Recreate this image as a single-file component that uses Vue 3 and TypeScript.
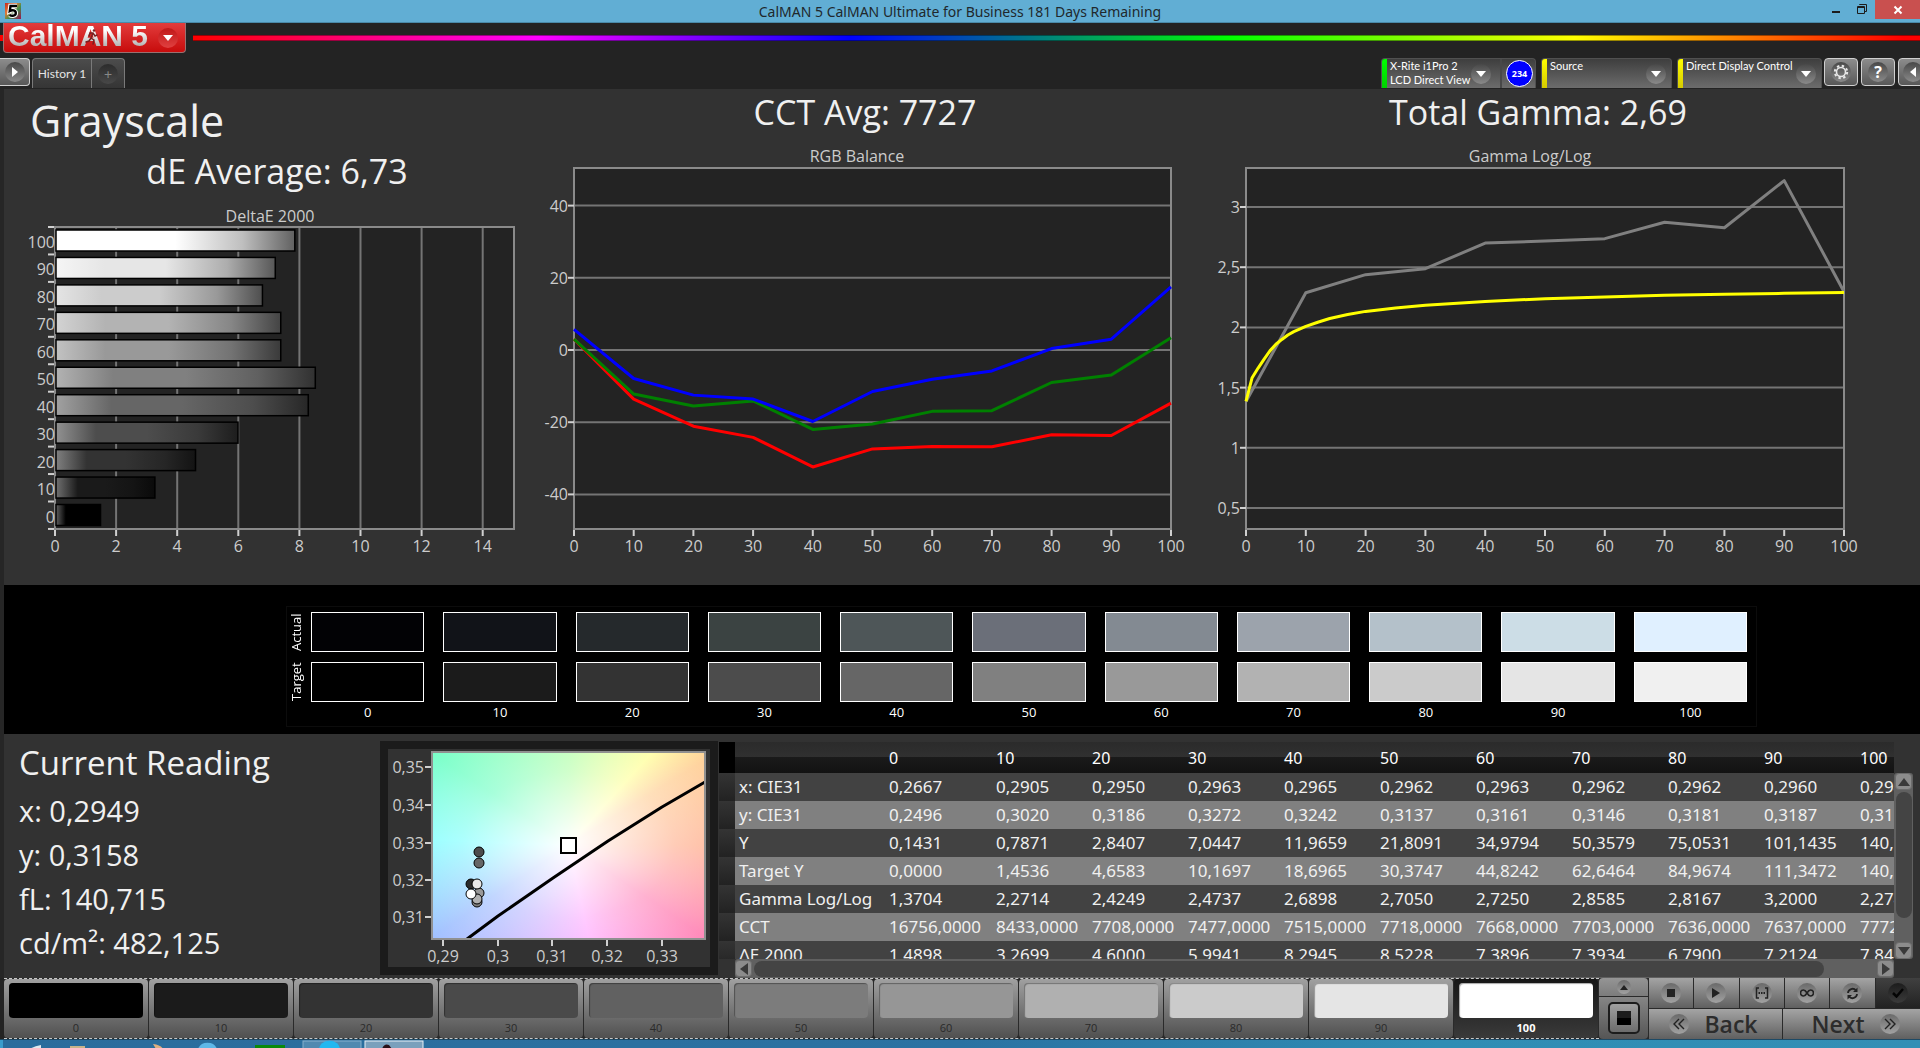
<script setup lang="ts">
interface Series {
  color: string
  values: number[]
}

const levels: number[] = [0, 10, 20, 30, 40, 50, 60, 70, 80, 90, 100]

/* DeltaE bar chart */
const deltaE: number[] = [1.49, 3.27, 4.6, 5.99, 8.29, 8.52, 7.39, 7.39, 6.79, 7.21, 7.85]
const deX = (v: number): number => 51 + v * 30.55
const deRow = (i: number): number => 34 + (10 - i) * 27.45
const deTicks: number[] = [0, 2, 4, 6, 8, 10, 12, 14]

const grey = (v: number): string => `rgb(${v}, ${v}, ${v})`
const barStops = (i: number) => {
  const base = Math.round(i * 25.5)
  return [
    { at: '0%', color: grey(Math.min(255, Math.round(base * 0.65 + 95))) },
    { at: '22%', color: grey(base) },
    { at: '50%', color: grey(base) },
    { at: '78%', color: grey(Math.round(base * 0.75)) },
    { at: '100%', color: grey(Math.round(base * 0.38)) },
  ]
}

/* RGB balance line chart */
const rgbX = (v: number): number => 34 + v * 5.97
const rgbY = (v: number): number => 217 - v * 3.61
const rgbTicks: number[] = [40, 20, 0, -20, -40]
const rgbSeries: Series[] = [
  { color: '#ff0000', values: [3, -13.6, -21.1, -24.2, -32.4, -27.4, -26.7, -26.8, -23.5, -23.7, -14.7] },
  { color: '#008000', values: [3, -12.2, -15.5, -14.1, -22, -20.5, -17, -16.8, -9, -6.9, 3.4] },
  { color: '#0000ff', values: [5.7, -7.9, -12.5, -13.6, -19.8, -11.5, -8.1, -5.8, 0.4, 3, 17.5] },
]
const rgbPoints = (s: Series): string => s.values.map((v, i) => `${rgbX(i * 10)},${rgbY(v)}`).join(' ')

/* Gamma line chart */
const gamX = (v: number): number => 46 + v * 5.98
const gamY = (v: number): number => 74 + (3 - v) * 120.4
const gamTicks: number[] = [3, 2.5, 2, 1.5, 1, 0.5]
const comma = (v: number): string => String(v).replace('.', ',')
const measured: number[] = [1.385, 2.288, 2.438, 2.488, 2.7, 2.717, 2.737, 2.873, 2.828, 3.219, 2.296]
const measuredPoints = measured.map((v, i) => `${gamX(i * 10)},${gamY(v)}`).join(' ')
const targetCurve: [number, number][] = [
  [0, 1.385], [1, 1.579], [2, 1.66], [3, 1.735], [4, 1.805], [5, 1.86], [6, 1.9], [7, 1.937], [8, 1.965],
  [10, 2.008], [12, 2.043], [14, 2.074], [17, 2.107], [20, 2.133], [25, 2.162], [30, 2.184], [40, 2.216],
  [50, 2.238], [60, 2.253], [70, 2.266], [80, 2.275], [90, 2.283], [100, 2.29],
]
const targetPoints = targetCurve.map(([x, y]) => `${gamX(x)},${gamY(y)}`).join(' ')

/* Swatches */
const actual: string[] = ['#020205', '#111318', '#25292c', '#3b4342', '#4e5658', '#6b6f79', '#838a92', '#9ca3ac', '#b4c1ca', '#ccdde6', '#e0f0ff']
const target: string[] = ['#000000', '#1b1b1b', '#333333', '#4c4c4c', '#666666', '#808080', '#999999', '#b2b2b2', '#cbcbcb', '#e5e5e5', '#f0f0f0']
const patches: string[] = ['#000000', '#1b1b1b', '#333333', '#4a4a4a', '#616161', '#7c7c7c', '#969696', '#b0b0b0', '#cbcbcb', '#e5e5e5', '#ffffff']

/* Chromaticity chart */
const cieY = [
  { label: '0,35', y: 18 }, { label: '0,34', y: 56 }, { label: '0,33', y: 94 }, { label: '0,32', y: 131 }, { label: '0,31', y: 168 },
]
const cieX = [
  { label: '0,29', x: 55 }, { label: '0,3', x: 110 }, { label: '0,31', x: 164 }, { label: '0,32', x: 219 }, { label: '0,33', x: 274 },
]
const dots = [
  { x: 91, y: 103, c: '#4c4c4c' }, { x: 91, y: 114, c: '#666666' }, { x: 83, y: 135, c: '#2b2b2b' },
  { x: 91, y: 144, c: '#999999' }, { x: 89, y: 153, c: '#808080' }, { x: 89, y: 150, c: '#b0b0b0' },
  { x: 89, y: 135, c: '#e8e8e8' }, { x: 83, y: 145, c: '#ffffff' },
]

/* Data table */
const rows: { name: string; cells: string[] }[] = [
  { name: 'x: CIE31', cells: ['0,2667', '0,2905', '0,2950', '0,2963', '0,2965', '0,2962', '0,2963', '0,2962', '0,2962', '0,2960', '0,2949'] },
  { name: 'y: CIE31', cells: ['0,2496', '0,3020', '0,3186', '0,3272', '0,3242', '0,3137', '0,3161', '0,3146', '0,3181', '0,3187', '0,3158'] },
  { name: 'Y', cells: ['0,1431', '0,7871', '2,8407', '7,0447', '11,9659', '21,8091', '34,9794', '50,3579', '75,0531', '101,1435', '140,7150'] },
  { name: 'Target Y', cells: ['0,0000', '1,4536', '4,6583', '10,1697', '18,6965', '30,3747', '44,8242', '62,6464', '84,9674', '111,3472', '140,7150'] },
  { name: 'Gamma Log/Log', cells: ['1,3704', '2,2714', '2,4249', '2,4737', '2,6898', '2,7050', '2,7250', '2,8585', '2,8167', '3,2000', '2,2740'] },
  { name: 'CCT', cells: ['16756,0000', '8433,0000', '7708,0000', '7477,0000', '7515,0000', '7718,0000', '7668,0000', '7703,0000', '7636,0000', '7637,0000', '7772,0000'] },
  { name: 'ΔE 2000', cells: ['1,4898', '3,2699', '4,6000', '5,9941', '8,2945', '8,5228', '7,3896', '7,3934', '6,7900', '7,2124', '7,8450'] },
]
</script>

<template>
  <div class="app">
    <div class="titlebar">
      <div class="title-icon">
        <svg width="16" height="16" viewBox="0 0 16 16">
          <defs>
            <linearGradient id="appicon" x1="0" y1="0" x2="1" y2="1">
              <stop offset="0" stop-color="#c22a1e" />
              <stop offset="0.35" stop-color="#e07a3a" />
              <stop offset="0.6" stop-color="#3f8f4a" />
              <stop offset="1" stop-color="#a01050" />
            </linearGradient>
          </defs>
          <rect width="16" height="16" fill="url(#appicon)" />
          <path d="M12 3H5.500L4.800 8C7 6.800 10.800 7 10.800 10C10.800 13 7 13.400 4.500 12" fill="none" stroke="#fff" stroke-width="4.500" />
          <path d="M12 3H5.500L4.800 8C7 6.800 10.800 7 10.800 10C10.800 13 7 13.400 4.500 12" fill="none" stroke="#000" stroke-width="2.400" />
        </svg>
      </div>
      <div class="title-text">CalMAN 5 CalMAN Ultimate for Business 181 Days Remaining</div>
      <div class="win-buttons">
        <button class="win" aria-label="Minimize">
          <svg width="12" height="16" viewBox="0 0 12 16"><rect x="2" y="11" width="8" height="2" fill="#1c1c1c" /></svg>
        </button>
        <button class="win" aria-label="Restore">
          <svg width="12" height="16" viewBox="0 0 12 16" fill="none" stroke="#1c1c1c">
            <path d="M3.500 5V4.500H10.500V11.500H9" />
            <path d="M1.500 6.500H8.500V13.500H1.500ZM1 7.500H9" />
          </svg>
        </button>
        <button class="win close" aria-label="Close">
          <svg width="10" height="10" viewBox="0 0 10 10"><path d="M1.500 1.500L8.500 8.500M8.500 1.500L1.500 8.500" stroke="#fff" stroke-width="2" /></svg>
        </button>
      </div>
    </div>

    <header class="header">
      <div class="brand-row">
        <div class="spectrum-stub"></div>
        <button class="logo" aria-label="CalMAN 5 menu">
          <span class="logo-text">CalMAN 5</span>
          <svg class="runner" width="14" height="18" viewBox="0 0 14 18" fill="none" stroke="#7a2020" stroke-width="1.500" stroke-linecap="round">
            <circle cx="9" cy="2.500" r="1.300" fill="#7a2020" stroke="none" />
            <path d="M8 5L6 10L9 12L8 16M6 10L4 13L1 14M4 8L5 5L8 5L10 8L12 7" />
          </svg>
          <span class="knob red"><svg width="10" height="6" viewBox="0 0 10 6"><path d="M0 0H10L5 6Z" fill="#fff" /></svg></span>
        </button>
        <div class="spectrum"></div>
      </div>

      <div class="tab-row">
        <button class="tool expand" aria-label="Expand">
          <span class="knob"><svg width="6" height="10" viewBox="0 0 6 10"><path d="M0 0L6 5L0 10Z" fill="#fff" /></svg></span>
        </button>
        <div class="tabs">
          <button class="tab">History 1</button>
          <button class="tab add" aria-label="Add tab"><span class="knob dark">+</span></button>
        </div>
        <div class="spacer"></div>
        <div class="device meter">
          <button class="device-main">
            <span class="stripe green"></span>
            <span class="device-text">X-Rite i1Pro 2<br />LCD Direct View</span>
            <span class="knob"><svg width="10" height="6" viewBox="0 0 10 6"><path d="M0 0H10L5 6Z" fill="#fff" /></svg></span>
          </button>
          <button class="badge-cell"><span class="badge">234</span></button>
        </div>
        <button class="device source">
          <span class="stripe yellow"></span>
          <span class="device-text">Source</span>
          <span class="knob"><svg width="10" height="6" viewBox="0 0 10 6"><path d="M0 0H10L5 6Z" fill="#fff" /></svg></span>
        </button>
        <button class="device display">
          <span class="stripe yellow"></span>
          <span class="device-text">Direct Display Control</span>
          <span class="knob"><svg width="10" height="6" viewBox="0 0 10 6"><path d="M0 0H10L5 6Z" fill="#fff" /></svg></span>
        </button>
        <div class="tool-group">
          <button class="tool" aria-label="Settings">
            <span class="knob">
              <svg width="16" height="16" viewBox="0 0 16 16" fill="none" stroke="#e8e8e8">
                <circle cx="8" cy="8" r="4.500" stroke-width="1.600" />
                <circle cx="8" cy="8" r="6.200" stroke-width="2" stroke-dasharray="2.400 2.470" />
              </svg>
            </span>
          </button>
          <button class="tool" aria-label="Help"><span class="knob help">?</span></button>
          <button class="tool collapse" aria-label="Collapse">
            <span class="knob"><svg width="6" height="10" viewBox="0 0 6 10"><path d="M6 0L0 5L6 10Z" fill="#fff" /></svg></span>
          </button>
        </div>
      </div>
    </header>

    <main class="workspace">
      <section class="charts">
        <div class="chart-card de-card">
          <h1>Grayscale</h1>
          <h2>dE Average: 6,73</h2>
          <svg class="chart" viewBox="0 0 536 392">
            <defs>
              <linearGradient v-for="(v, i) in deltaE" :id="`bar${i}`" :key="i">
                <stop v-for="s in barStops(i)" :key="s.at" :offset="s.at" :stop-color="s.color" />
              </linearGradient>
            </defs>
            <text x="266" y="29" text-anchor="middle">DeltaE 2000</text>
            <rect x="51" y="34" width="459" height="302" class="plot" />
            <g class="grid">
              <line v-for="t in deTicks.slice(1)" :key="t" :x1="deX(t)" :x2="deX(t)" y1="34" y2="336" />
            </g>
            <rect x="51" y="34" width="459" height="302" class="frame" />
            <rect
              v-for="(v, i) in deltaE" :key="i"
              x="52" :y="deRow(i) + 3" :width="deX(v) - 52" height="21"
              :fill="`url(#bar${i})`" stroke="#000" stroke-width="1.500"
            />
            <g class="ticks">
              <line v-for="i in 12" :key="i" x1="44" x2="50" :y1="34 + (i - 1) * 27.45" :y2="34 + (i - 1) * 27.45" />
              <line v-for="t in deTicks" :key="t" :x1="deX(t)" :x2="deX(t)" y1="337" y2="343" />
            </g>
            <text v-for="(l, i) in levels" :key="l" x="51" :y="deRow(i) + 21" text-anchor="end">{{ l }}</text>
            <text v-for="t in deTicks" :key="t" :x="deX(t)" y="359" text-anchor="middle">{{ t }}</text>
          </svg>
        </div>

        <div class="chart-card rgb-card">
          <h2>CCT Avg: 7727</h2>
          <svg class="chart" viewBox="0 0 660 452">
            <text x="317" y="29" text-anchor="middle">RGB Balance</text>
            <rect x="34" y="35" width="597" height="361" class="plot" />
            <g class="grid">
              <line v-for="t in rgbTicks" :key="t" x1="34" x2="631" :y1="rgbY(t)" :y2="rgbY(t)" />
            </g>
            <rect x="34" y="35" width="597" height="361" class="frame" />
            <polyline v-for="s in rgbSeries" :key="s.color" :points="rgbPoints(s)" :stroke="s.color" class="series" />
            <g class="ticks">
              <line v-for="t in rgbTicks" :key="t" x1="28" x2="34" :y1="rgbY(t)" :y2="rgbY(t)" />
              <line v-for="l in levels" :key="l" :x1="rgbX(l)" :x2="rgbX(l)" y1="397" y2="403" />
            </g>
            <text v-for="t in rgbTicks" :key="t" x="28" :y="rgbY(t) + 6" text-anchor="end">{{ t }}</text>
            <text v-for="l in levels" :key="l" :x="rgbX(l)" y="419" text-anchor="middle">{{ l }}</text>
          </svg>
        </div>

        <div class="chart-card gamma-card">
          <h2>Total Gamma: 2,69</h2>
          <svg class="chart" viewBox="0 0 720 452">
            <text x="330" y="29" text-anchor="middle">Gamma Log/Log</text>
            <rect x="46" y="35" width="598" height="361" class="plot" />
            <g class="grid">
              <line v-for="t in gamTicks" :key="t" x1="46" x2="644" :y1="gamY(t)" :y2="gamY(t)" />
            </g>
            <rect x="46" y="35" width="598" height="361" class="frame" />
            <polyline :points="measuredPoints" stroke="#808080" class="series" />
            <polyline :points="targetPoints" stroke="#ffff00" class="series" />
            <g class="ticks">
              <line v-for="t in gamTicks" :key="t" x1="40" x2="46" :y1="gamY(t)" :y2="gamY(t)" />
              <line v-for="l in levels" :key="l" :x1="gamX(l)" :x2="gamX(l)" y1="397" y2="403" />
            </g>
            <text v-for="t in gamTicks" :key="t" x="40" :y="gamY(t) + 6" text-anchor="end">{{ comma(t) }}</text>
            <text v-for="l in levels" :key="l" :x="gamX(l)" y="419" text-anchor="middle">{{ l }}</text>
          </svg>
        </div>
      </section>

      <section class="swatches">
        <div class="swatch-grid">
          <span class="side-label">Actual</span>
          <div v-for="(c, i) in actual" :key="`a${i}`" class="swatch" :style="{ background: c }"></div>
          <span class="side-label">Target</span>
          <div v-for="(c, i) in target" :key="`t${i}`" class="swatch" :style="{ background: c }"></div>
          <span></span>
          <span v-for="l in levels" :key="l" class="swatch-label">{{ l }}</span>
        </div>
      </section>

      <section class="details">
        <div class="reading">
          <h2>Current Reading</h2>
          <p>x: 0,2949</p>
          <p>y: 0,3158</p>
          <p>fL: 140,715</p>
          <p>cd/m²: 482,125</p>
        </div>

        <div class="cie">
          <svg class="chart" viewBox="0 0 322 218">
            <foreignObject x="44" y="2" width="274" height="188">
              <div class="gamut"></div>
            </foreignObject>
            <path d="M79 190L110 167L165 129L220 92L274 58L317 33" fill="none" stroke="#000" stroke-width="3" stroke-linejoin="round" />
            <rect x="44" y="3" width="273" height="187" fill="none" stroke="#909090" stroke-width="2" />
            <rect x="173" y="89" width="15" height="15" fill="#fff" stroke="#000" stroke-width="2" />
            <circle v-for="(d, i) in dots" :key="i" :cx="d.x" :cy="d.y" r="5" :fill="d.c" stroke="#000" />
            <g class="ticks">
              <line v-for="t in cieY" :key="t.label" x1="37" x2="43" :y1="t.y" :y2="t.y" />
              <line v-for="t in cieX" :key="t.label" :x1="t.x" :x2="t.x" y1="191" y2="197" />
            </g>
            <text v-for="t in cieY" :key="t.label" x="36" :y="t.y + 6" text-anchor="end">{{ t.label }}</text>
            <text v-for="t in cieX" :key="t.label" :x="t.x" y="213" text-anchor="middle">{{ t.label }}</text>
          </svg>
        </div>

        <div class="data">
          <div class="table-view">
            <table>
              <colgroup>
                <col class="c-mark" />
                <col class="c-name" />
                <col class="c-first" />
                <col v-for="n in 10" :key="n" class="c-val" />
              </colgroup>
              <thead>
                <tr>
                  <th class="mark"></th>
                  <th></th>
                  <th v-for="l in levels" :key="l" scope="col">{{ l }}</th>
                </tr>
              </thead>
              <tbody>
                <tr v-for="r in rows" :key="r.name">
                  <td class="mark"></td>
                  <th scope="row">{{ r.name }}</th>
                  <td v-for="(c, i) in r.cells" :key="i">{{ c }}</td>
                </tr>
              </tbody>
            </table>
          </div>
          <div class="vbar">
            <button class="arrow" aria-label="Scroll up"><svg width="12" height="8" viewBox="0 0 12 8"><path d="M0 8L6 0L12 8Z" fill="#3a3a3a" /></svg></button>
            <div class="vtrack"><div class="vthumb"></div></div>
            <button class="arrow" aria-label="Scroll down"><svg width="12" height="8" viewBox="0 0 12 8"><path d="M0 0L6 8L12 0Z" fill="#3a3a3a" /></svg></button>
          </div>
          <div class="hbar">
            <button class="arrow" aria-label="Scroll left"><svg width="8" height="12" viewBox="0 0 8 12"><path d="M8 0L0 6L8 12Z" fill="#3a3a3a" /></svg></button>
            <div class="htrack"><div class="hthumb"></div></div>
            <button class="arrow" aria-label="Scroll right"><svg width="8" height="12" viewBox="0 0 8 12"><path d="M0 0L8 6L0 12Z" fill="#3a3a3a" /></svg></button>
          </div>
        </div>
      </section>
    </main>

    <footer class="controls">
      <div class="patches">
        <button v-for="(c, i) in patches" :key="i" class="patch" :class="{ active: i === 10 }">
          <span class="patch-color" :style="{ background: c }"></span>
          <span class="patch-label">{{ i * 10 }}</span>
        </button>
      </div>
      <div class="stack">
        <button class="stack-top" aria-label="Show more">
          <span class="knob flat"><svg width="8" height="5" viewBox="0 0 8 5"><path d="M0 5L4 0L8 5Z" fill="#222" /></svg></span>
        </button>
        <button class="stack-main" aria-label="Pattern window"><span class="window-icon"><span></span></span></button>
      </div>
      <div class="transport">
        <div class="transport-row">
          <button aria-label="Stop"><span class="knob flat"><svg width="8" height="8" viewBox="0 0 8 8"><rect width="8" height="8" fill="#222" /></svg></span></button>
          <button aria-label="Play"><span class="knob flat"><svg width="8" height="10" viewBox="0 0 8 10"><path d="M0 0L8 5L0 10Z" fill="#222" /></svg></span></button>
          <button aria-label="Read series">
            <span class="knob flat">
              <svg width="14" height="12" viewBox="0 0 14 12" fill="none" stroke="#222" stroke-width="1.500">
                <path d="M4 1H1.500V11H4M10 1H12.500V11H10" /><path d="M3.500 6H10.500" stroke-width="2" stroke-dasharray="1.500 1" />
              </svg>
            </span>
          </button>
          <button aria-label="Continuous">
            <span class="knob flat">
              <svg width="14" height="8" viewBox="0 0 14 8" fill="none" stroke="#222" stroke-width="1.600">
                <path d="M7 4C5.500 1.500 4.500 1 3.500 1A3 3 0 0 0 3.500 7C4.500 7 5.500 6.500 7 4C8.500 1.500 9.500 1 10.500 1A3 3 0 0 1 10.500 7C9.500 7 8.500 6.500 7 4Z" />
              </svg>
            </span>
          </button>
          <button aria-label="Refresh">
            <span class="knob flat">
              <svg width="13" height="13" viewBox="0 0 13 13" fill="none" stroke="#222" stroke-width="1.800">
                <path d="M2 6A4.500 4.500 0 0 1 10 3.500M11 7A4.500 4.500 0 0 1 3 9.500" />
                <path d="M11.500 0.500V5H7ZM1.500 12.500V8H6Z" fill="#222" stroke="none" />
              </svg>
            </span>
          </button>
          <button class="confirm" aria-label="Confirm">
            <span class="knob night"><svg width="12" height="10" viewBox="0 0 12 10"><path d="M1 5L4.500 8.500L11 1" fill="none" stroke="#050505" stroke-width="2.500" /></svg></span>
          </button>
        </div>
        <div class="nav-row">
          <button class="back">
            <span class="knob flat"><svg width="12" height="12" viewBox="0 0 12 12" fill="none" stroke="#222" stroke-width="1.400"><path d="M6 1L1 6L6 11M11 1L6 6L11 11" /></svg></span>
            <span>Back</span>
          </button>
          <button class="next">
            <span>Next</span>
            <span class="knob flat"><svg width="12" height="12" viewBox="0 0 12 12" fill="none" stroke="#222" stroke-width="1.400"><path d="M1 1L6 6L1 11M6 1L11 6L6 11" /></svg></span>
          </button>
        </div>
      </div>
    </footer>

    <div class="taskbar">
      <svg width="430" height="9" viewBox="0 0 430 9">
        <rect width="3" height="9" fill="#3a9ccc" />
        <path d="M30 9Q34 6 41 5V9Z" fill="#dfe8ee" />
        <rect x="70" y="6" width="15" height="3" fill="#c8b48a" />
        <path d="M153 4Q161 5 163 9H156Z" fill="#e0b080" />
        <path d="M198 9A10 9 0 0 1 217 9Z" fill="#5fb8e8" />
        <rect x="255" y="5" width="30" height="4" fill="#0a8a0a" />
        <rect x="303" y="1" width="58" height="12" fill="#5089b0" stroke="#86b0cc" />
        <path d="M319 9A9 7 0 0 1 340 9Z" fill="#22b8f0" />
        <rect x="365" y="1" width="58" height="12" fill="#7aa0bc" stroke="#e8f0f6" />
        <path d="M382 9Q384 3 389 5L392 9Z" fill="#2a1018" />
      </svg>
    </div>
  </div>
</template>

<style>
body {
  margin: 0;
  background: #232323;
}
</style>

<style scoped>
* {
  box-sizing: border-box;
}
.app {
  min-height: 100vh;
  display: flex;
  flex-direction: column;
  background: #232323;
  color: #f0f0f0;
  font-family: 'Open Sans', 'Noto Sans', sans-serif;
  overflow: hidden;
}
button {
  margin: 0;
  padding: 0;
  border: 0;
  background: none;
  color: inherit;
  font-family: inherit;
  cursor: pointer;
}
svg {
  display: block;
}
h1,
h2,
p {
  margin: 0;
  font-weight: 400;
}

/* title bar */
.titlebar {
  display: grid;
  grid-template-columns: 100px 1fr 100px;
  height: 23px;
  background: #61aed4;
  border-bottom: 1px solid #4a8aa9;
}
.title-icon {
  padding: 3px 5px;
}
.title-text {
  font-family: 'Noto Sans', sans-serif;
  font-size: 14px;
  line-height: 23px;
  text-align: center;
  color: #20282c;
}
.win-buttons {
  display: flex;
  justify-content: flex-end;
}
.win {
  width: 26px;
  height: 19px;
  display: flex;
  justify-content: center;
}
.win.close {
  width: 45px;
  align-items: center;
  background: #c9504f;
}

/* header */
.header {
  background: #232323;
}
.brand-row {
  display: flex;
  height: 35px;
}
.spectrum-stub {
  width: 3px;
  height: 6px;
  margin-top: 12px;
  background: #f00;
}
.logo {
  position: relative;
  width: 183px;
  height: 30px;
  display: flex;
  align-items: center;
  justify-content: space-between;
  padding: 0 7px 0 4px;
  border: 1px solid #9a7070;
  border-top: 0;
  border-radius: 0 0 4px 4px;
  background: linear-gradient(#e23c3c, #c80c0c);
}
.logo-text {
  align-self: flex-start;
  font-family: 'Liberation Sans', Arial, sans-serif;
  font-weight: 700;
  font-size: 30px;
  line-height: 26px;
  white-space: nowrap;
  background: linear-gradient(#ffffff 30%, #b8b8b8 85%);
  background-clip: text;
  color: transparent;
}
.runner {
  position: absolute;
  left: 81px;
  top: 5px;
}
.spectrum {
  flex: 1;
  height: 6px;
  margin: 12px 0 0 7px;
  border-top: 1px solid rgba(0, 0, 0, 0.4);
  border-bottom: 1px solid rgba(0, 0, 0, 0.4);
  background: linear-gradient(90deg, #f00, #f0f 20%, #00f 38%, #0f0 60%, #ff0 80%, #f00 99%);
}
.knob {
  flex: none;
  width: 20px;
  height: 20px;
  border-radius: 50%;
  display: flex;
  align-items: center;
  justify-content: center;
  background: linear-gradient(#484848, #8a8a8a);
}
.knob.red {
  background: linear-gradient(#c01818, #e04040);
}
.knob.dark {
  background: linear-gradient(#2c2c2c, #484848);
  color: #888;
  font-size: 14px;
  line-height: 20px;
}
.knob.flat {
  background: linear-gradient(#6a6a6a, #a2a2a2);
}
.knob.night {
  background: linear-gradient(#1c1c1c, #3a3a3a);
}
.knob.help {
  color: #fff;
  font-size: 16px;
  font-weight: 700;
}
.tab-row {
  display: flex;
  height: 31px;
}
.tool {
  width: 34px;
  height: 28px;
  display: flex;
  align-items: center;
  justify-content: center;
  border: 1px solid #d0d0d0;
  border-radius: 4px;
  background: linear-gradient(#8c8c8c, #585858);
}
.tool.expand {
  width: 30px;
  border-left: 0;
  border-radius: 0 4px 4px 0;
}
.tabs {
  display: flex;
  height: 30px;
  margin-left: 2px;
  border: 1px solid #7a7a7a;
  border-bottom: 0;
  border-radius: 4px 4px 0 0;
  background: linear-gradient(#4c4c4c, #353535);
}
.tab {
  width: 58px;
  font-family: Lato, sans-serif;
  font-size: 12px;
  color: #e4e4e4;
}
.tab.add {
  width: 33px;
  display: flex;
  align-items: center;
  justify-content: center;
  border-left: 1px solid #7a7a7a;
}
.spacer {
  flex: 1;
}
.device {
  display: flex;
  height: 30px;
  border: 1px solid #505050;
  border-bottom: 0;
  border-radius: 4px 4px 0 0;
  background: linear-gradient(#3e3e3e, #6c6c6c);
  overflow: hidden;
  text-align: left;
}
.device .knob {
  align-self: center;
  margin-right: 5px;
}
.device.meter {
  width: 155px;
}
.device.meter .knob {
  margin-right: 9px;
}
.device.source {
  width: 131px;
  margin-left: 5px;
}
.device.display {
  width: 145px;
  margin-left: 5px;
}
.device-main {
  flex: 1;
  display: flex;
  text-align: left;
}
.stripe {
  flex: none;
  width: 5px;
  height: 30px;
}
.stripe.green {
  background: linear-gradient(#00ff00, #00d000);
}
.stripe.yellow {
  background: linear-gradient(#ffff00, #d4c800);
}
.device-text {
  flex: 1;
  padding-left: 3px;
  font-family: Lato, sans-serif;
  font-size: 11px;
  line-height: 14px;
  color: #fff;
  white-space: nowrap;
}
.badge-cell {
  width: 35px;
  display: flex;
  align-items: center;
  justify-content: flex-end;
  padding-right: 2px;
  border-left: 2px solid #484848;
}
.badge {
  width: 27px;
  height: 27px;
  border: 1px solid #fff;
  border-radius: 50%;
  background: #0000ff;
  color: #fff;
  font-size: 9px;
  font-weight: 700;
  line-height: 25px;
  text-align: center;
}
.tool-group {
  display: flex;
  gap: 3px;
  width: 96px;
  margin-left: 2px;
  overflow: hidden;
}
.tool-group .tool {
  flex: none;
}
.tool-group .collapse {
  width: 30px;
}

/* workspace */
.workspace {
  border-left: 4px solid #262626;
  background: #323232;
}
.charts {
  display: grid;
  grid-template-columns: minmax(0, 536fr) minmax(0, 660fr) minmax(0, 720fr);
}
.chart-card h1 {
  padding: 6px 0 0 26px;
  font-size: 43px;
  line-height: 52px;
}
.chart-card h2 {
  padding-top: 2px;
  font-size: 34px;
  line-height: 42px;
  text-align: center;
}
.chart-card.de-card h2 {
  padding: 2px 0 0 10px;
  line-height: 44px;
}
.rgb-card h2 {
  padding-right: 10px;
}
.gamma-card h2 {
  padding-right: 44px;
}
.chart {
  width: 100%;
  height: auto;
}
.chart text {
  font-size: 16px;
  fill: #cccccc;
}
.plot {
  fill: #232323;
}
.frame {
  fill: none;
  stroke: #8a8a8a;
  stroke-width: 2;
}
.grid line {
  stroke: #747474;
  stroke-width: 2;
}
.ticks line {
  stroke: #d0d0d0;
  stroke-width: 2;
}
.series {
  fill: none;
  stroke-width: 3;
  stroke-linejoin: round;
}

.swatches {
  background: #000;
  padding: 21px 163px 7px 282px;
}
.swatch-grid {
  display: grid;
  grid-template-columns: 5px repeat(11, minmax(0, 1fr));
  grid-template-rows: 40px 40px 14px;
  column-gap: 19px;
  row-gap: 10px;
  padding: 5px 9px 0 0;
  border: 1px solid #0c0c0c;
}
.swatch {
  border: 1px solid #fff;
}
.side-label {
  justify-self: start;
  writing-mode: vertical-rl;
  transform: rotate(180deg);
  width: 18px;
  font-size: 13px;
  line-height: 18px;
  text-align: center;
  color: #fff;
}
.swatch-label {
  margin-top: -9px;
  font-size: 13px;
  line-height: 18px;
  text-align: center;
  color: #fff;
}

.details {
  display: grid;
  grid-template-columns: 375px 338px minmax(0, 1fr);
  column-gap: 1px;
  height: 244px;
  padding-right: 7px;
}
.reading {
  padding: 6px 0 0 15px;
}
.reading h2 {
  margin-bottom: 3px;
  font-size: 33px;
  line-height: 46px;
}
.reading p {
  font-size: 29px;
  line-height: 44px;
}
.cie {
  height: 234px;
  margin-top: 7px;
  padding: 8px;
  background: #1b1b1b;
}
.cie svg {
  background: #323232;
}
.gamut {
  height: 100%;
  background:
    radial-gradient(farthest-corner at 50% 50%, #ffffff 0%, rgba(255, 255, 255, 0.35) 55%, rgba(255, 255, 255, 0) 100%),
    conic-gradient(#b8ffb0 0deg, #ffffa0 42deg, #ffd098 58deg, #ffb090 90deg, #ff88b8 124deg, #ffb0ff 168deg, #a0c0ff 236deg, #80ffff 272deg, #78ffc8 304deg, #b8ffb0 360deg);
}

.data {
  display: grid;
  grid-template-columns: minmax(0, 1fr) 19px;
  grid-template-rows: 217px 19px;
  margin-top: 8px;
}
.table-view {
  overflow: hidden;
}
table {
  width: 1233px;
  table-layout: fixed;
  border-collapse: collapse;
  font-family: 'Noto Sans', sans-serif;
  font-size: 17px;
}
.c-mark {
  width: 16px;
}
.c-name {
  width: 150px;
}
.c-first {
  width: 107px;
}
.c-val {
  width: 96px;
}
th,
td {
  height: 28px;
  padding: 0 0 0 4px;
  font-weight: 400;
  line-height: 28px;
  text-align: left;
  white-space: nowrap;
}
thead th {
  height: 31px;
  font-size: 16px;
  color: #fff;
}
thead tr {
  background: linear-gradient(#2b2b2b, #303030 48%, #1a1a1a 50%, #121212);
}
thead .mark {
  background: #000;
}
tbody tr {
  background: #424242;
}
tbody tr:nth-child(even) {
  background: #808080;
}
tbody .mark {
  background: linear-gradient(#343434, #222222);
}
.vbar {
  margin-top: 31px;
  display: flex;
  flex-direction: column;
  align-items: center;
  background: #606060;
  border-radius: 3px;
}
.hbar {
  margin-left: 16px;
  display: flex;
  align-items: center;
  background: #606060;
  border-radius: 3px;
}
.arrow {
  flex: none;
  width: 17px;
  height: 17px;
  display: flex;
  align-items: center;
  justify-content: center;
  border: 1px solid #6c6c6c;
  border-radius: 4px;
  background: #8c8c8c;
}
.vtrack {
  flex: 1;
  width: 16px;
  padding: 2px 0 24px;
}
.vthumb {
  height: 100%;
  border-radius: 8px;
  background: #444;
}
.htrack {
  flex: 1;
  height: 16px;
  padding: 0 53px 0 2px;
}
.hthumb {
  height: 100%;
  border-radius: 8px;
  background: #444;
}

/* bottom controls */
.controls {
  display: flex;
  height: 61px;
  padding-left: 4px;
}
.patches {
  flex: 1;
  display: flex;
  border-top: 1px dashed #c8c8c8;
  border-bottom: 1px dashed #c8c8c8;
  background: #2a2a2a;
}
.patch {
  flex: 1;
  display: flex;
  flex-direction: column;
  padding: 4px 5px 0;
  margin-right: 1px;
  border-radius: 4px;
  background: linear-gradient(#a0a0a0, #505050);
  color: #2a2a2a;
}
.patch.active {
  background: linear-gradient(#161616, #3a3a3a);
  color: #fff;
  font-weight: 700;
}
.patch-color {
  height: 36px;
  border-radius: 4px;
  box-shadow: inset 1px 1px 1px rgba(0, 0, 0, 0.35);
}
.patch-label {
  font-size: 11px;
  line-height: 20px;
  text-align: center;
}
.stack {
  display: flex;
  flex-direction: column;
  width: 49px;
  background: #2a2a2a;
  gap: 1px;
}
.stack-top {
  height: 18px;
  display: flex;
  align-items: center;
  justify-content: center;
  border-radius: 4px 4px 0 0;
  background: linear-gradient(#959595, #7c7c7c);
}
.stack-top .knob {
  width: 14px;
  height: 14px;
}
.stack-main {
  flex: 1;
  display: flex;
  align-items: center;
  justify-content: center;
  border-radius: 0 0 4px 4px;
  background: linear-gradient(#858585, #555);
}
.window-icon {
  width: 32px;
  height: 32px;
  display: flex;
  align-items: center;
  justify-content: center;
  border: 2px solid #1c1c1c;
  border-radius: 5px;
  background: linear-gradient(#a0a0a0, #6c6c6c);
}
.window-icon span {
  width: 14px;
  height: 14px;
  background: linear-gradient(#1c1c1c 50%, #000 50%);
}
.transport {
  width: 272px;
  display: flex;
  flex-direction: column;
  gap: 1px;
  padding-left: 1px;
  background: #2a2a2a;
}
.transport-row,
.nav-row {
  flex: 1;
  display: flex;
  gap: 1px;
}
.transport-row button,
.nav-row button {
  flex: 1;
  display: flex;
  align-items: center;
  justify-content: center;
  background: linear-gradient(#a4a4a4, #606060);
}
.transport-row .confirm {
  background: linear-gradient(#404040, #222);
}
.nav-row button {
  gap: 15px;
  font-size: 23px;
  font-weight: 600;
  line-height: 28px;
  color: #2c2c2c;
}
.nav-row .back {
  padding-right: 4px;
}
.nav-row .next {
  padding-left: 8px;
}

.taskbar {
  height: 9px;
  overflow: hidden;
  background: linear-gradient(90deg, #2a6c9c, #2a72a2 50%, #2f8db4 75%, #338fb5);
  border-top: 1px solid #1d4a66;
}
</style>
